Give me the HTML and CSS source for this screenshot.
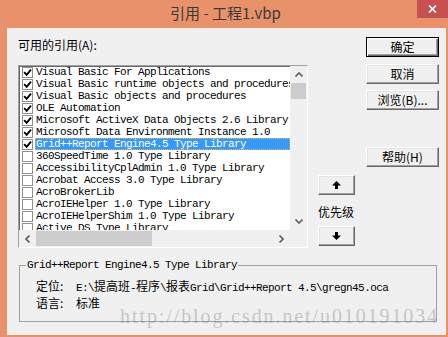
FILE: index.html
```html
<!DOCTYPE html>
<html lang="zh-CN">
<head>
    <meta charset="UTF-8">
    <title>引用 - 工程1.vbp</title>
    <link rel="stylesheet" href="styles.css">
</head>
<body>

<!-- Title bar -->
<div class="titlebar">
    <span></span>
    <div class="title">引用 - 工程1.vbp</div>
    <div class="close">
        <svg width="9" height="8" viewBox="0 0 9 8"><path d="M1 0.5L8 7.5M8 0.5L1 7.5" stroke="#fff" stroke-width="1.7"/></svg>
    </div>
</div>

<div class="client">
    <div class="top">
        <!-- Available references -->
        <div class="refs">
            <div class="label">可用的引用(A):</div>
            <div class="listbox">
                <ul class="items">
                    <li class="item"><span class="check on"></span><span class="name">Visual Basic For Applications</span></li>
                    <li class="item"><span class="check on"></span><span class="name">Visual Basic runtime objects and procedures</span></li>
                    <li class="item"><span class="check on"></span><span class="name">Visual Basic objects and procedures</span></li>
                    <li class="item"><span class="check on"></span><span class="name">OLE Automation</span></li>
                    <li class="item"><span class="check on"></span><span class="name">Microsoft ActiveX Data Objects 2.6 Library</span></li>
                    <li class="item"><span class="check on"></span><span class="name">Microsoft Data Environment Instance 1.0</span></li>
                    <li class="item selected"><span class="check on"></span><span class="name">Grid++Report Engine4.5 Type Library</span></li>
                    <li class="item"><span class="check"></span><span class="name">360SpeedTime 1.0 Type Library</span></li>
                    <li class="item"><span class="check"></span><span class="name">AccessibilityCplAdmin 1.0 Type Library</span></li>
                    <li class="item"><span class="check"></span><span class="name">Acrobat Access 3.0 Type Library</span></li>
                    <li class="item"><span class="check"></span><span class="name">AcroBrokerLib</span></li>
                    <li class="item"><span class="check"></span><span class="name">AcroIEHelper 1.0 Type Library</span></li>
                    <li class="item"><span class="check"></span><span class="name">AcroIEHelperShim 1.0 Type Library</span></li>
                    <li class="item"><span class="check"></span><span class="name">Active DS Type Library</span></li>
                </ul>
                <div class="vscroll">
                    <div class="sb-arrow"><svg width="8" height="5" viewBox="0 0 8 5"><path d="M0.5 4.5L4 1L7.5 4.5" fill="none" stroke="#606060" stroke-width="1.6"/></svg></div>
                    <div class="vthumb"></div>
                    <div class="sb-arrow bottom"><svg width="8" height="5" viewBox="0 0 8 5"><path d="M0.5 0.5L4 4L7.5 0.5" fill="none" stroke="#606060" stroke-width="1.6"/></svg></div>
                </div>
                <div class="hscroll">
                    <div class="sb-arrow"><svg width="5" height="8" viewBox="0 0 5 8"><path d="M4.5 0.5L1 4L4.5 7.5" fill="none" stroke="#606060" stroke-width="1.6"/></svg></div>
                    <div class="hthumb"></div>
                    <div class="sb-arrow right"><svg width="5" height="8" viewBox="0 0 5 8"><path d="M0.5 0.5L4 4L0.5 7.5" fill="none" stroke="#606060" stroke-width="1.6"/></svg></div>
                </div>
                <div class="corner"></div>
            </div>
        </div>

        <!-- Priority -->
        <div class="priority">
            <button class="btn arrow"><svg width="9" height="8" viewBox="0 0 9 8"><path d="M4.5 0L9 4.5H6V8H3V4.5H0Z" fill="#000"/></svg></button>
            <div class="priority-label">优先级</div>
            <button class="btn arrow"><svg width="9" height="8" viewBox="0 0 9 8"><path d="M4.5 8L9 3.5H6V0H3V3.5H0Z" fill="#000"/></svg></button>
        </div>

        <!-- Dialog buttons -->
        <div class="actions">
            <button class="btn default">确定</button>
            <button class="btn">取消</button>
            <button class="btn">浏览(B)...</button>
            <button class="btn help">帮助(H)</button>
        </div>
    </div>

    <!-- Details of the selected reference -->
    <fieldset class="details">
        <legend>Grid++Report Engine4.5 Type Library</legend>
        <div class="detail-row">
            <span class="key">定位:</span>
            <span class="value">E:\<span class="cjk">提高班</span>-<span class="cjk">程序</span>\<span class="cjk">报表</span>Grid\Grid++Report 4.5\gregn45.oca</span>
        </div>
        <div class="detail-row">
            <span class="key">语言:</span>
            <span class="value"><span class="cjk">标准</span></span>
        </div>
    </fieldset>

    <div class="watermark">http://blog.csdn.net/u010191034</div>
</div>

</body>
</html>
```

FILE: styles.css
```css
body {
    margin: 0;
    width: 448px;
    height: 337px;
    overflow: hidden;
    background-color: #e9916a;
    font-family: "Noto Sans CJK SC", sans-serif;
    color: #000;
}

/* Title bar */
.titlebar {
    display: grid;
    grid-template-columns: 1fr auto 1fr;
    height: 28px;
}

.title {
    font-size: 15px;
    line-height: 26px;
    color: #3a3a3a;
    padding-left: 3px;
}

.close {
    justify-self: end;
    align-self: start;
    width: 31px;
    height: 18px;
    background-color: #c75050;
    display: flex;
    justify-content: center;
    align-items: center;
}

/* Client area */
.client {
    position: relative;
    box-sizing: border-box;
    height: 307px;
    margin: 0 2px 0 7px;
    padding: 9px 7px 0 11px;
    background-color: #f0f0f0;
}

.top {
    display: flex;
}

.refs {
    width: 290px;
}

.label {
    font-size: 12px;
    line-height: 12px;
    margin: 2px 0 14px;
}

.listbox {
    box-sizing: border-box;
    width: 290px;
    height: 183px;
    border: 1px solid;
    border-color: #a0a0a0 #fff #fff #a0a0a0;
    box-shadow: inset 1px 1px #696969;
    background-color: #fff;
    display: grid;
    grid-template-columns: 1fr 17px;
    grid-template-rows: 1fr 17px;
}

.items {
    list-style: none;
    margin: 0;
    padding: 0 0 0 3px;
    overflow: hidden;
    font-family: "Liberation Mono", monospace;
    font-size: 11px;
    letter-spacing: -0.6px;
}

.item {
    display: flex;
    align-items: center;
    height: 12px;
    white-space: nowrap;
}

.check {
    flex: none;
    box-sizing: border-box;
    width: 11px;
    height: 11px;
    margin-right: 2px;
    border: 1px solid #8e8f8f;
    background-color: #fff;
}

.check.on {
    background: #fff url("data:image/svg+xml,%3Csvg xmlns='http://www.w3.org/2000/svg' viewBox='0 0 9 9'%3E%3Cpath d='M1.2 4.2L3.6 6.8L8 1.6' fill='none' stroke='%23000' stroke-width='1.9'/%3E%3C/svg%3E") center / 9px 9px no-repeat;
}

.name {
    flex: 1;
    padding: 0 1px;
    line-height: 12px;
}

.item.selected .name {
    background-color: #3399ff;
    color: #fff;
    outline: 1px dotted #f5b041;
    outline-offset: -1px;
}

/* Scroll bars */
.vscroll {
    background-color: #f0f0f0;
    display: flex;
    flex-direction: column;
}

.sb-arrow {
    flex: none;
    width: 17px;
    height: 17px;
    display: flex;
    justify-content: center;
    align-items: center;
}

.sb-arrow.bottom {
    margin-top: auto;
}

.sb-arrow.right {
    margin-left: auto;
}

.vthumb {
    height: 16px;
    margin: 0 1px 0 1px;
    background-color: #cdcdcd;
}

.hscroll {
    background-color: #f0f0f0;
    display: flex;
}

.hthumb {
    width: 116px;
    margin: 1px 0;
    background-color: #cdcdcd;
}

.corner {
    background-color: #f0f0f0;
}

/* Priority arrows */
.priority {
    width: 37px;
    margin-left: 10px;
    padding-top: 138px;
    display: flex;
    flex-direction: column;
}

.priority-label {
    font-size: 12px;
    line-height: 12px;
    margin: 11px 0 8px;
    white-space: nowrap;
}

/* Buttons */
.actions {
    width: 73px;
    margin-left: 11px;
    display: flex;
    flex-direction: column;
    gap: 6px;
}

.btn {
    box-sizing: border-box;
    height: 20px;
    padding: 0;
    font-family: "Noto Sans CJK SC", sans-serif;
    font-size: 12px;
    line-height: 16px;
    color: #000;
    background-color: #f0f0f0;
    border: 1px solid;
    border-color: #fff #696969 #696969 #fff;
    box-shadow: inset -1px -1px #a0a0a0, inset 1px 1px #e3e3e3;
    display: flex;
    justify-content: center;
    align-items: center;
}

.btn.default {
    border-color: #000;
    box-shadow: inset 1px 1px #fff, inset -1px -1px #696969, inset -2px -2px #a0a0a0;
    margin-bottom: 1px;
}

.btn.help {
    margin-top: 31px;
}

.btn.arrow {
    width: 37px;
}

/* Details group */
.details {
    margin: 11px 2px 0 1px;
    padding: 6px 6px 10px;
    border: 1px solid #a0a0a0;
    min-width: 0;
}

.details legend {
    padding: 0 1px;
    font-family: "Liberation Mono", monospace;
    font-size: 11px;
    letter-spacing: -0.6px;
    line-height: 12px;
}

.detail-row {
    display: flex;
    height: 17px;
    align-items: center;
    margin-left: 10px;
    white-space: nowrap;
}

.key {
    width: 40px;
    font-size: 12px;
}

.value {
    font-family: "Liberation Mono", monospace;
    font-size: 11px;
    letter-spacing: -0.6px;
}

.cjk {
    font-family: "Noto Sans CJK SC", sans-serif;
    font-size: 12px;
    letter-spacing: 0;
}

.watermark {
    position: absolute;
    top: 278px;
    right: 7px;
    font-family: "Liberation Serif", serif;
    font-size: 20px;
    line-height: 20px;
    letter-spacing: 1.9px;
    color: rgba(128, 128, 128, 0.4);
    pointer-events: none;
}
```
